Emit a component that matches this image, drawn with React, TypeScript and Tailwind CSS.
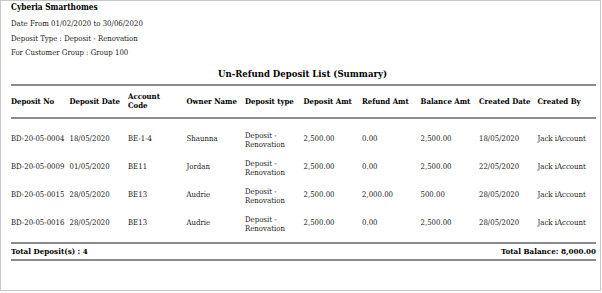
const rows = [
  ['BD-20-05-0004', '18/05/2020', 'BE-1-4', 'Shaunna', '2,500.00', '0.00', '2,500.00', '18/05/2020'],
  ['BD-20-05-0009', '01/05/2020', 'BE11', 'Jordan', '2,500.00', '0.00', '2,500.00', '22/05/2020'],
  ['BD-20-05-0015', '28/05/2020', 'BE13', 'Audrie', '2,500.00', '2,000.00', '500.00', '28/05/2020'],
  ['BD-20-05-0016', '28/05/2020', 'BE13', 'Audrie', '2,500.00', '0.00', '2,500.00', '28/05/2020'],
];

const headers = [
  'Deposit No',
  'Deposit Date',
  'Account Code',
  'Owner Name',
  'Deposit type',
  'Deposit Amt',
  'Refund Amt',
  'Balance Amt',
  'Created Date',
  'Created By',
];

export default function App() {
  return (
    <div className="w-[602px] h-[293px] bg-white font-['DejaVu_Serif',serif] font-stretch-condensed text-[7.75px] text-[#222] antialiased">
      <div className="w-[601px] h-[291px] border border-[#c8c8c8] pl-[10px] pr-[6px]">
        {/* Report info */}
        <div className="leading-[14.5px]">
          <div className="font-bold text-[8.25px] leading-[13px] mb-[3px] text-black">Cyberia Smarthomes</div>
          <div>Date From 01/02/2020 to 30/06/2020</div>
          <div>Deposit Type : Deposit - Renovation</div>
          <div>For Customer Group : Group 100</div>
        </div>

        <h1 className="mt-[7px] text-center font-bold text-[9.5px] leading-[12px] text-black">
          Un-Refund Deposit List (Summary)
        </h1>

        <table className="mt-[4px] w-[585px] table-fixed border-collapse">
          <thead>
            <tr className="border-t-2 border-b-2 border-[#8c8c8c] h-[33px]">
              {headers.map((h) => (
                <th
                  key={h}
                  className={`text-left align-middle font-bold text-black leading-[9px] ${h === 'Account Code' ? 'pr-[14px]' : ''}`}
                >
                  {h}
                </th>
              ))}
            </tr>
          </thead>
          <tbody>
            {rows.map((r, i) => (
              <tr key={r[0]} className={i === 0 ? 'h-[32px]' : 'h-[28px]'}>
                {r.slice(0, 4).map((c, j) => (
                  <td key={j} className="align-bottom pb-[5px]">
                    {c}
                  </td>
                ))}
                <td className="align-bottom pb-[1px] leading-[9px]">
                  Deposit -<br />
                  Renovation
                </td>
                {r.slice(4).map((c, j) => (
                  <td key={j} className="align-bottom pb-[5px]">
                    {c}
                  </td>
                ))}
                <td className="align-bottom pb-[5px]">Jack iAccount</td>
              </tr>
            ))}
            <tr className="h-[8px]">
              <td colSpan={10}></td>
            </tr>
          </tbody>
        </table>

        {/* Totals */}
        <div className="w-[585px] border-t-2 border-b-2 border-[#8c8c8c] h-[19px] flex items-center justify-between font-bold text-[8px] text-black">
          <span>Total Deposit(s) : 4</span>
          <span>Total Balance: 8,000.00</span>
        </div>
      </div>
    </div>
  );
}
